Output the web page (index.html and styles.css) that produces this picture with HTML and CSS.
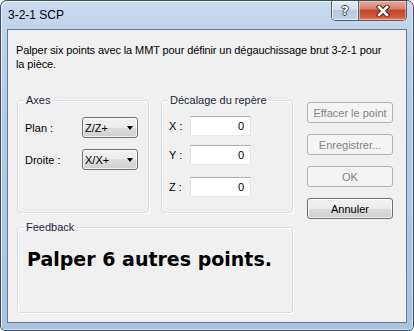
FILE: index.html
```html
<!DOCTYPE html>
<html lang="fr">
<head>
<meta charset="utf-8">
<title>3-2-1 SCP</title>
<link rel="stylesheet" href="styles.css">
</head>
<body>
<div class="window">
  <div class="titlebar">
    <span class="title">3-2-1 SCP</span>
    <div class="caption-btns">
      <span class="cap help">?</span>
      <span class="cap close">
        <svg width="14" height="12" viewBox="0 0 14 12">
          <path d="M3 2 L11 10 M11 2 L3 10" stroke="#4a2a24" stroke-width="4.6" stroke-linecap="square" fill="none"/>
          <path d="M3 2 L11 10 M11 2 L3 10" stroke="#ffffff" stroke-width="2.6" stroke-linecap="square" fill="none"/>
        </svg>
      </span>
    </div>
  </div>
  <div class="client">
    <p class="intro">Palper six points avec la MMT pour définir un dégauchissage brut 3-2-1 pour<br>la pièce.</p>
    <div class="main">
      <fieldset class="group axes">
        <legend>Axes</legend>
        <div class="rows">
          <div class="row"><span class="lbl">Plan :</span><div class="combo"><span>Z/Z+</span><i class="arrow"></i></div></div>
          <div class="row"><span class="lbl">Droite :</span><div class="combo"><span>X/X+</span><i class="arrow"></i></div></div>
        </div>
      </fieldset>
      <fieldset class="group offset">
        <legend>Décalage du repère</legend>
        <div class="rows">
          <div class="row"><span class="lbl">X :</span><div class="textbox">0</div></div>
          <div class="row"><span class="lbl">Y :</span><div class="textbox">0</div></div>
          <div class="row z"><span class="lbl">Z :</span><div class="textbox">0</div></div>
        </div>
      </fieldset>
      <div class="buttons">
        <span class="btn disabled">Effacer le point</span>
        <span class="btn disabled">Enregistrer...</span>
        <span class="btn disabled">OK</span>
        <span class="btn">Annuler</span>
      </div>
      <fieldset class="group feedback">
        <legend>Feedback</legend>
        <p class="big">Palper 6 autres points.</p>
      </fieldset>
    </div>
  </div>
</div>
</body>
</html>
```
FILE: styles.css
```css
html, body {
  margin: 0;
  padding: 0;
  background: #ffffff;
}
body {
  width: 414px;
  height: 331px;
  overflow: hidden;
  font-family: "Liberation Sans", Arial, sans-serif;
  font-size: 11px;
  color: #000;
}
.window {
  box-sizing: border-box;
  width: 414px;
  height: 331px;
  border: 1px solid #3c4d60;
  border-radius: 7px 7px 5px 5px;
  background: linear-gradient(180deg, #c9dbef 0px, #bfd3ea 28px, #b3cae4 120px, #a9c3e0 331px);
  box-shadow: inset 1px 1px 0 rgba(255,255,255,0.7), inset -1px -1px 0 rgba(255,255,255,0.5);
  padding: 0 6px 7px 6px;
  display: flex;
  flex-direction: column;
}
.titlebar {
  height: 28px;
  display: flex;
  justify-content: space-between;
  align-items: flex-start;
}
.title {
  font-family: "Liberation Sans", Arial, sans-serif;
  font-size: 12px;
  line-height: 28px;
  padding-left: 1px;
  color: #000;
}
.caption-btns {
  display: flex;
  height: 19px;
  border: 1px solid #4f5f72;
  border-top: none;
  border-radius: 0 0 5px 5px;
  overflow: hidden;
}
.cap {
  display: flex;
  align-items: center;
  justify-content: center;
  height: 19px;
}
.help {
  width: 26px;
  border-right: 1px solid #4f5f72;
  background: linear-gradient(180deg, #e6edf6 0%, #d2deec 45%, #b6c8dd 50%, #c3d3e6 100%);
  box-shadow: inset 0 0 0 1px rgba(255,255,255,0.6);
  font-family: "DejaVu Sans", sans-serif;
  font-weight: bold;
  font-size: 13px;
  color: #ffffff;
  text-shadow: -1px 0 0 #3d4b5c, 1px 0 0 #3d4b5c, 0 -1px 0 #3d4b5c, 0 1px 0 #3d4b5c;
}
.close {
  width: 47px;
  background: linear-gradient(180deg, #e9ab9a 0%, #d7816c 40%, #c4462c 50%, #cf5a3f 85%, #e08a6c 100%);
  box-shadow: inset 0 0 0 1px rgba(255,220,210,0.5);
}
.client {
  flex: 1;
  border: 1px solid #63788f;
  background: #f0f0f0;
  padding: 13px 0 0 8px;
}
.intro {
  margin: 0;
  line-height: 14px;
  letter-spacing: -0.1px;
}
.main {
  margin-top: 22px;
  margin-left: 1px;
  display: grid;
  grid-template-columns: 132px 132px 87px;
  grid-template-rows: 120px 93px;
  column-gap: 12px;
  row-gap: 7px;
}
.group {
  box-sizing: border-box;
  margin: 0;
  min-width: 0;
  border: 1px solid #d5dfe5;
  border-radius: 3px;
  box-shadow: inset 1px 1px 0 #ffffff, 1px 1px 0 #ffffff;
  padding: 0 7px;
}
.group legend {
  padding: 0 2px;
  margin-left: -1px;
  line-height: 14px;
  color: #1a1f3f;
}
.axes { height: 120px; padding-top: 10px; }
.offset { height: 120px; padding-top: 9px; }
.feedback {
  grid-column: 1 / span 2;
  height: 93px;
  padding: 13px 9px 0 9px;
}
.feedback legend { margin-left: -3px; }
.rows {
  display: flex;
  flex-direction: column;
}
.axes .rows { gap: 11px; }
.offset .rows { gap: 9px; }
.offset .row.z { margin-top: 3px; }
.row {
  display: flex;
  align-items: center;
}
.axes .row { height: 21px; }
.offset .row { height: 20px; }
.axes .lbl { width: 57px; }
.offset .lbl { width: 21px; }
.combo {
  box-sizing: border-box;
  width: 56px;
  height: 21px;
  border: 1px solid #707070;
  border-radius: 3px;
  background: linear-gradient(180deg, #f2f2f2 0%, #ebebeb 50%, #dddddd 50%, #cfcfcf 100%);
  box-shadow: inset 0 0 0 1px rgba(255,255,255,0.7);
  display: flex;
  align-items: center;
  justify-content: space-between;
  padding: 0 4px 0 2px;
  color: #000;
}
.arrow {
  width: 0;
  height: 0;
  border-left: 3.5px solid transparent;
  border-right: 3.5px solid transparent;
  border-top: 4px solid #000;
}
.textbox {
  box-sizing: border-box;
  width: 61px;
  height: 20px;
  background: #ffffff;
  border: 1px solid #e2e3ea;
  border-top-color: #abadb3;
  border-bottom-color: #e3e9ef;
  text-align: right;
  padding-right: 6px;
  line-height: 18px;
}
.buttons {
  grid-column: 3;
  grid-row: 1 / span 2;
  margin-left: 2px;
  padding-top: 9px;
  display: flex;
  flex-direction: column;
  gap: 11px;
}
.btn {
  box-sizing: border-box;
  height: 21px;
  width: 86px;
  border: 1px solid #707070;
  border-radius: 3px;
  background: linear-gradient(180deg, #f2f2f2 0%, #ebebeb 50%, #dddddd 50%, #cfcfcf 100%);
  box-shadow: inset 0 0 0 1px rgba(255,255,255,0.7);
  display: flex;
  align-items: center;
  justify-content: center;
  color: #000;
}
.btn.disabled {
  border-color: #adb2b5;
  background: #f4f4f4;
  box-shadow: none;
  color: #838383;
}
.big {
  margin: 0;
  font-family: "DejaVu Sans", Verdana, sans-serif;
  font-weight: bold;
  font-size: 19px;
  line-height: 24px;
  color: #000;
  white-space: nowrap;
}
```
